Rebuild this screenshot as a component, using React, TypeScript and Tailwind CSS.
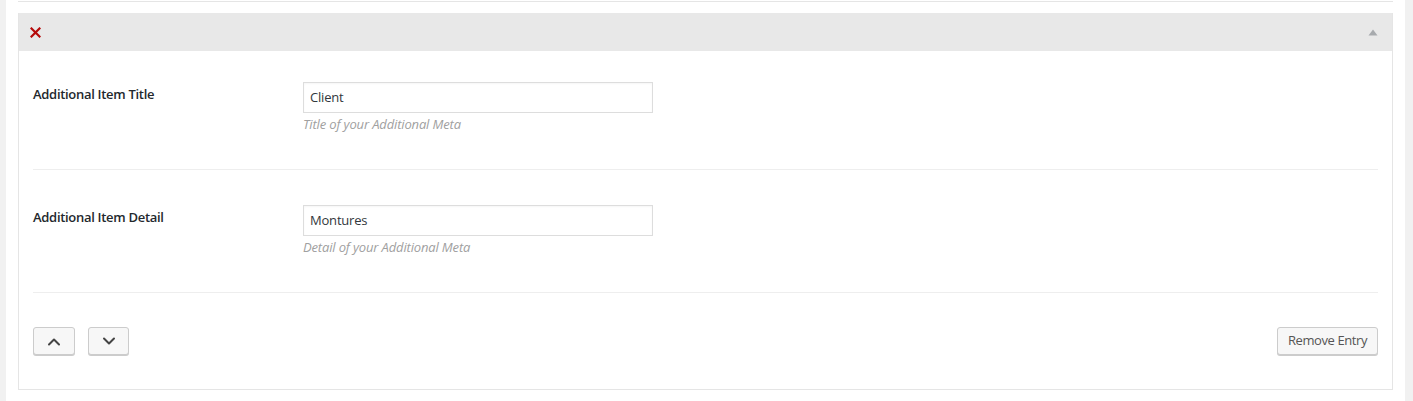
import React from "react";

const font = { fontFamily: '"Open Sans", "Noto Sans", "Liberation Sans", sans-serif' };

function Chevron({ up }: { up?: boolean }) {
  return (
    <svg width="14" height="9" viewBox="0 0 14 9" fill="none">
      <path
        d={up ? "M2 7.5 L7 2.5 L12 7.5" : "M2 1.5 L7 6.5 L12 1.5"}
        stroke="#444"
        strokeWidth="2"
        strokeLinecap="round"
        strokeLinejoin="round"
      />
    </svg>
  );
}

function Field({ label, value, desc, first }: { label: string; value: string; desc: string; first?: boolean }) {
  return (
    <div className={`flex border-b border-[#eeeeee] ${first ? "pt-[31px]" : "pt-[35px]"} pb-[35px]`}>
      <div className="w-[270px] pt-[4px] text-[13px] leading-[17px] font-semibold tracking-[-0.3px] text-[#23282d]">{label}</div>
      <div className="flex flex-col">
        <div className="w-[350px] h-[31px] border border-[#dddddd] bg-white flex items-center px-[6px] text-[13px] tracking-[-0.2px] text-[#32373c] shadow-[inset_0_1px_2px_rgba(0,0,0,0.04)]">
          {value}
        </div>
        <div className="mt-[2px] text-[13px] leading-[19px] italic tracking-[-0.15px] text-[#a0a0a0]">{desc}</div>
      </div>
    </div>
  );
}

export default function App() {
  return (
    <div className="w-[1413px] h-[401px] bg-[#f1f1f1] flex overflow-hidden" style={font}>
      <div className="w-[6px] shrink-0 bg-[#f1f1f1]" />
      <div className="w-[1399px] h-full bg-white pl-[12px] pr-[12px]">
        <div className="h-[1px] mt-[1px] bg-[#e5e5e5] w-[1375px]" />
        <div className="mt-[11px] w-[1375px] border border-[#e5e5e5] border-t-0">
          <div className="h-[38px] bg-[#e8e8e8] flex items-center justify-between pl-[11px] pr-[14px]">
            <svg width="11" height="11" viewBox="0 0 11 11">
              <path d="M1.5 1.5 L9.5 9.5 M9.5 1.5 L1.5 9.5" stroke="#b50a0a" strokeWidth="2.2" strokeLinecap="square" />
            </svg>
            <svg width="10" height="7" viewBox="0 0 10 7">
              <path d="M5 0.5 L9.5 6.5 L0.5 6.5 Z" fill="#a7aaad" />
            </svg>
          </div>
          <div className="px-[14px]">
            <Field first label="Additional Item Title" value="Client" desc="Title of your Additional Meta" />
            <Field label="Additional Item Detail" value="Montures" desc="Detail of your Additional Meta" />
            <div className="flex items-center justify-between pt-[34px] pb-[34px]">
              <div className="flex gap-[13px]">
                <div className="w-[42px] h-[28px] rounded-[3px] border border-[#cccccc] bg-[#f7f7f7] shadow-[0_1px_0_#cccccc] flex items-center justify-center">
                  <Chevron up />
                </div>
                <div className="w-[41px] h-[28px] rounded-[3px] border border-[#cccccc] bg-[#f7f7f7] shadow-[0_1px_0_#cccccc] flex items-center justify-center">
                  <Chevron />
                </div>
              </div>
              <div className="h-[28px] w-[101px] rounded-[3px] border border-[#cccccc] bg-[#f7f7f7] shadow-[0_1px_0_#cccccc] flex items-center justify-center text-[13px] tracking-[-0.4px] text-[#555555]">
                Remove Entry
              </div>
            </div>
          </div>
        </div>
      </div>
      <div className="w-[8px] shrink-0 bg-[#f1f1f1]" />
    </div>
  );
}
